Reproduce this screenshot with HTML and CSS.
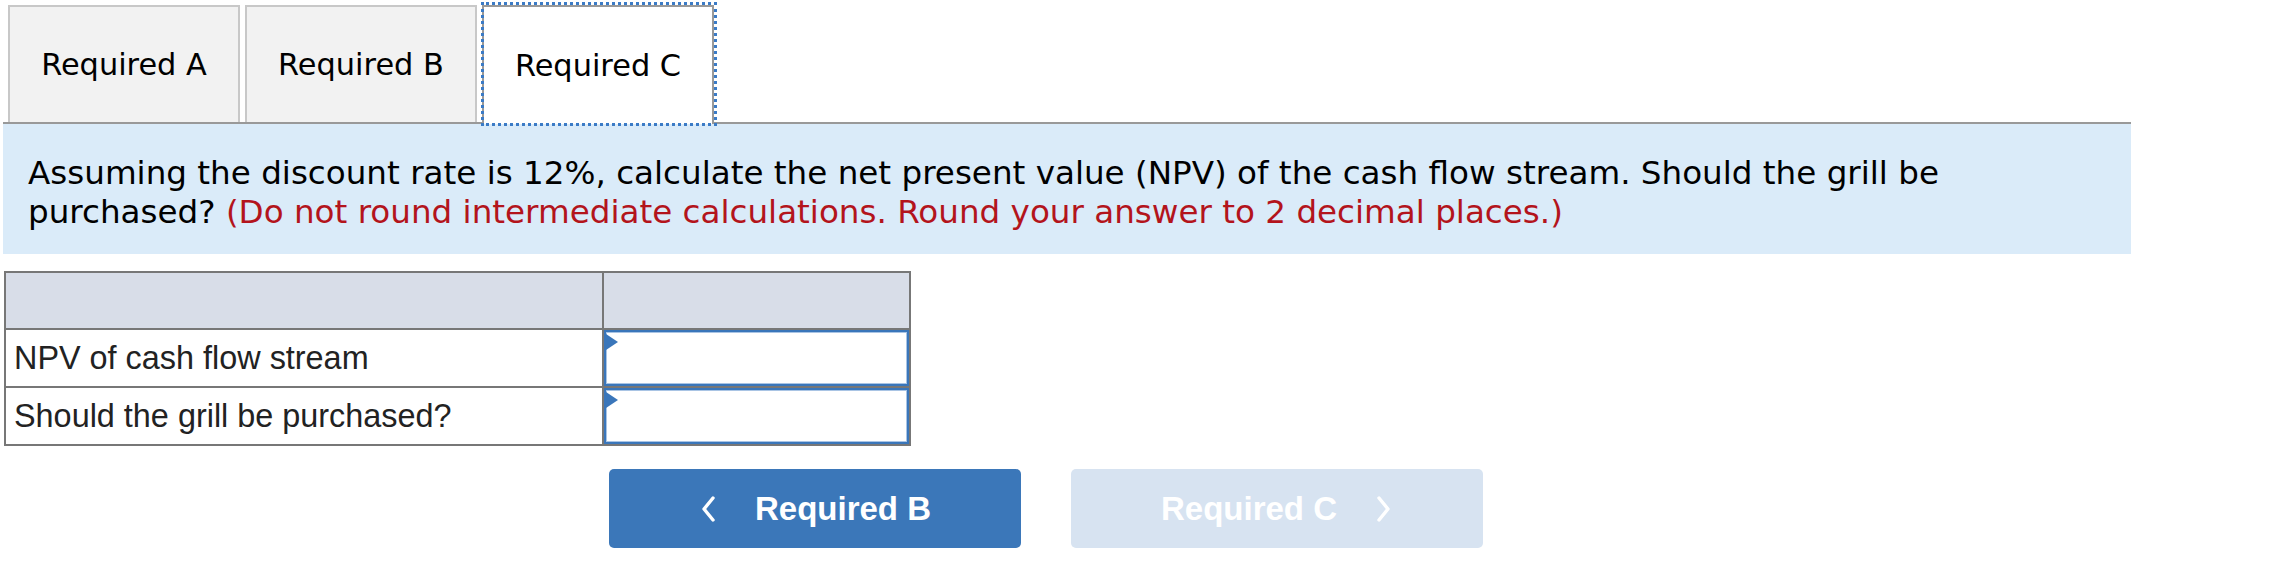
FILE: index.html
```html
<!DOCTYPE html>
<html lang="en">
<head>
  <meta charset="UTF-8" />
  <title>Required C</title>
  <link rel="stylesheet" href="styles.css">
</head>
<body>
  <div class="question">
    <ul class="tabs">
      <li class="tab">Required A</li>
      <li class="tab">Required B</li>
      <li class="tab active">Required C</li>
    </ul>

    <div class="prompt">
      <p>Assuming the discount rate is 12%, calculate the net present value (NPV) of the cash flow stream. Should the grill be purchased? <span class="hint">(Do not round intermediate calculations. Round your answer to 2 decimal places.)</span></p>
    </div>

    <table class="answers">
      <thead>
        <tr>
          <th></th>
          <th></th>
        </tr>
      </thead>
      <tbody>
        <tr>
          <td class="label">NPV of cash flow stream</td>
          <td class="entry"><div class="answer"><input type="text" /></div></td>
        </tr>
        <tr>
          <td class="label">Should the grill be purchased?</td>
          <td class="entry"><div class="answer"><input type="text" /></div></td>
        </tr>
      </tbody>
    </table>

    <div class="nav">
      <a class="nav-btn prev" href="#">
        <svg width="18" height="26" viewBox="0 0 18 26"><path d="M14 2 L5 13 L14 24" fill="none" stroke="#fff" stroke-width="3.4" stroke-linecap="round" stroke-linejoin="round"/></svg>
        <span>Required B</span>
      </a>
      <a class="nav-btn next disabled" href="#">
        <span>Required C</span>
        <svg width="18" height="26" viewBox="0 0 18 26"><path d="M4 2 L13 13 L4 24" fill="none" stroke="#fff" stroke-width="3.4" stroke-linecap="round" stroke-linejoin="round"/></svg>
      </a>
    </div>
  </div>
</body>
</html>
```

FILE: styles.css
```css
body {
  margin: 0;
  font-family: "DejaVu Sans", Verdana, sans-serif;
  background: #fff;
  color: #000;
}
.question {
  width: 2128px;
  padding-left: 3px;
}
.tabs {
  list-style: none;
  margin: 0;
  padding: 5px 0 0 5px;
  display: flex;
  gap: 5px;
  border-bottom: 2px solid #999;
  height: 117px;
}
.tab {
  position: relative;
  width: 232px;
  height: 117px;
  box-sizing: border-box;
  display: flex;
  align-items: center;
  justify-content: center;
  background: #f2f2f2;
  border: 2px solid #c8c8c8;
  border-bottom: none;
  font-size: 30.4px;
  color: #000;
}
.tab.active {
  background: #fff;
  border-color: #999;
  height: 119px;
  z-index: 1;
}
.tab.active::after {
  content: "";
  position: absolute;
  top: -5px;
  left: -3px;
  right: -5px;
  bottom: -2px;
  border: 3px dotted #3b7bc6;
}
.prompt {
  background: #daebf9;
  padding: 30px 25px 22px 25px;
}
.prompt p {
  margin: 0;
  max-width: 1990px;
  font-size: 32.6px;
  line-height: 39px;
}
.hint {
  color: #b3141c;
}
.answers {
  margin: 17px 0 0 1px;
  border-collapse: collapse;
  border: 2px solid #777;
  font-family: "Liberation Sans", Arial, sans-serif;
}
.answers th,
.answers td {
  border: 2px solid #777;
  padding: 0;
  height: 55px;
}
.answers td {
  height: 56px;
}
.answers th {
  background: #d8dde8;
}
.answers .label {
  width: 588px;
  padding-left: 8px;
  font-size: 32.4px;
  color: #222;
  text-align: left;
}
.answers .entry {
  width: 305px;
}
.answer {
  position: relative;
  height: 56px;
}
.answer::before {
  content: "";
  position: absolute;
  top: 4px;
  left: 2px;
  border-top: 8px solid transparent;
  border-bottom: 8px solid transparent;
  border-left: 12px solid #3a76ba;
}
.answer input {
  box-sizing: border-box;
  width: 100%;
  height: 100%;
  margin: 0;
  border: 2px solid #3a76ba;
  box-shadow: inset 0 0 0 1px #a9c4e4;
  outline: none;
  font-size: 26px;
}
.nav {
  display: flex;
  gap: 50px;
  margin-top: 23px;
  padding-left: 606px;
}
.nav-btn {
  width: 412px;
  height: 79px;
  border-radius: 5px;
  display: flex;
  align-items: center;
  justify-content: center;
  gap: 38px;
  text-decoration: none;
  color: #fff;
  font-family: "Liberation Sans", Arial, sans-serif;
  font-weight: bold;
  font-size: 33px;
  background: #3b77b9;
}
.nav-btn.disabled {
  background: #d7e3f1;
  cursor: default;
}
```
